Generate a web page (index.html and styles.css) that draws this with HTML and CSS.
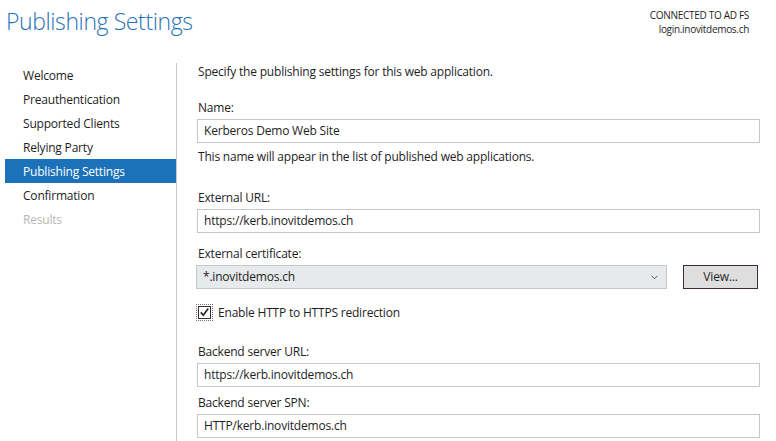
FILE: index.html
```html
<!DOCTYPE html>
<html>
<head>
<meta charset="utf-8">
<link rel="stylesheet" href="styles.css">
</head>
<body>
<div class="page">
  <header class="header">
    <h1 class="title">Publishing Settings</h1>
    <div class="conn">
      <div>CONNECTED TO AD FS</div>
      <div>login.inovitdemos.ch</div>
    </div>
  </header>
  <div class="main">
    <nav class="nav">
      <div class="nav-item">Welcome</div>
      <div class="nav-item">Preauthentication</div>
      <div class="nav-item">Supported Clients</div>
      <div class="nav-item">Relying Party</div>
      <div class="nav-item active">Publishing Settings</div>
      <div class="nav-item">Confirmation</div>
      <div class="nav-item disabled">Results</div>
    </nav>
    <section class="content">
      <div class="intro">Specify the publishing settings for this web application.</div>

      <div class="label l-name">Name:</div>
      <div class="input">Kerberos Demo Web Site</div>
      <div class="help">This name will appear in the list of published web applications.</div>

      <div class="label l-ext">External URL:</div>
      <div class="input">https://kerb.inovitdemos.ch</div>

      <div class="label l-cert">External certificate:</div>
      <div class="cert-row">
        <div class="combo">
          <span>*.inovitdemos.ch</span>
          <svg class="chev" width="7" height="5" viewBox="0 0 7 5"><path d="M0.5 0.8 L3.5 3.8 L6.5 0.8" fill="none" stroke="#555" stroke-width="1"/></svg>
        </div>
        <div class="btn">View...</div>
      </div>

      <div class="check-row">
        <span class="focus"><span class="box"><svg width="11" height="11" viewBox="0 0 11 11"><path d="M1.8 5.4 L4.3 8.2 L9.2 1.6" fill="none" stroke="#222" stroke-width="1.6"/></svg></span></span>
        <span>Enable HTTP to HTTPS redirection</span>
      </div>

      <div class="label l-back">Backend server URL:</div>
      <div class="input">https://kerb.inovitdemos.ch</div>

      <div class="label l-spn">Backend server SPN:</div>
      <div class="input">HTTP/kerb.inovitdemos.ch</div>
    </section>
  </div>
</div>
</body>
</html>
```

FILE: styles.css
```css
html, body {
  margin: 0;
  padding: 0;
  background: #ffffff;
}
body {
  font-family: "Open Sans", "Noto Sans", sans-serif;
  font-size: 12px;
  color: #1e1e1e;
  width: 776px;
  height: 441px;
  overflow: hidden;
}
.page {
  display: flex;
  flex-direction: column;
  height: 441px;
}
.header {
  display: flex;
  justify-content: space-between;
  align-items: flex-start;
  height: 64px;
  padding: 0 27px 0 6px;
}
.title {
  margin: 6px 0 0 0;
  font-family: "Open Sans", sans-serif;
  font-weight: 300;
  font-size: 23px;
  line-height: 30px;
  color: #1f72b8;
  letter-spacing: -0.4px;
}
.conn {
  margin-top: 8px;
  text-align: right;
  font-size: 10px;
  line-height: 14px;
  color: #1e1e1e;
  letter-spacing: -0.3px;
}
.main {
  display: flex;
  flex: 1;
}
.nav {
  width: 171px;
  padding-left: 5px;
  padding-top: 0;
  border-right: 1px solid #c8c8c8;
  flex-shrink: 0;
  margin-top: -1px;
}
.nav-item {
  height: 23px;
  padding-top: 1px;
  line-height: 24px;
  padding-left: 18px;
  color: #1e1e1e;
  letter-spacing: -0.2px;
}
.nav-item.active {
  background: #1c72ba;
  color: #ffffff;
}
.nav-item.disabled {
  color: #b8b8b8;
}
.content {
  flex: 1;
  padding-left: 20px;
  padding-right: 16px;
  display: flex;
  flex-direction: column;
  align-items: stretch;
  letter-spacing: -0.2px;
}
.intro {
  line-height: 16px;
  padding-left: 1px;
}
.label {
  line-height: 16px;
  padding-left: 1px;
}
.l-name { margin-top: 20px; }
.l-ext { margin-top: 25px; }
.l-cert { margin-top: 13px; }
.l-back { margin-top: 23px; }
.l-spn { margin-top: 8px; }
.input {
  margin-top: 3px;
  height: 22px;
  line-height: 22px;
  border: 1px solid #c6c6c6;
  padding-left: 6px;
  background: #fff;
}
.help {
  margin-top: 6px;
  line-height: 16px;
  padding-left: 1px;
}
.cert-row {
  display: flex;
  align-items: center;
  margin-top: 3px;
  margin-left: -1px;
}
.combo {
  height: 22px;
  line-height: 22px;
  border: 1px solid #c4c8c8;
  background: #e6eaea;
  display: flex;
  justify-content: space-between;
  align-items: center;
  padding: 0 8px 0 6px;
  width: 455px;
}
.chev {
  display: block;
}
.btn {
  margin-left: 16px;
  width: 73px;
  height: 22px;
  line-height: 22px;
  border: 1px solid #3e2a3a;
  background: #dedede;
  text-align: center;
}
.check-row {
  display: flex;
  align-items: center;
  margin-top: 14px;
  height: 18px;
  margin-left: -1px;
}
.focus {
  display: inline-flex;
  padding: 1px;
  border: 1px dotted #8a6a6a;
  margin-right: 5px;
}
.box {
  display: inline-flex;
  width: 11px;
  height: 11px;
  border: 1px solid #333;
  background: #fff;
}
```
